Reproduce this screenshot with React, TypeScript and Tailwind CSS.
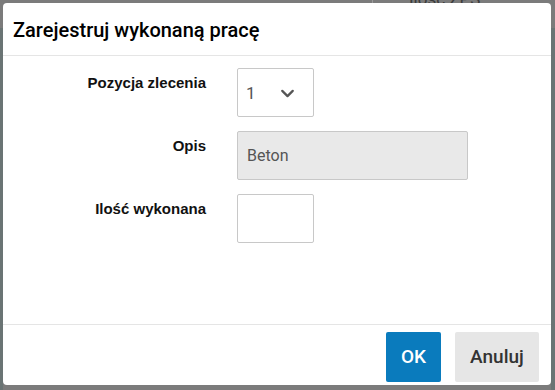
import { ChevronDown } from 'lucide-react';

const rowLabel =
  "w-[203px] shrink-0 pt-[5px] text-right font-['Liberation_Sans',Arial,sans-serif] text-[15px] leading-[20px] font-bold text-[#111]";

export default function App() {
  return (
    <div className="relative h-[390px] w-[555px] overflow-hidden bg-[#7b7b7b] font-['Roboto',sans-serif]">
      {/* backdrop scraps */}
      <div className="absolute left-0 top-[28px] h-[362px] w-[3px] bg-[#6a7474]" />
      <div className="absolute right-0 top-[28px] h-[362px] w-[4px] bg-[#6a7474]" />
      <div className="absolute left-[372px] top-0 h-[4px] w-px bg-[#9a9a9a]" />
      <div className="absolute left-[409px] top-[-11px] text-[17px] leading-[20px] text-[#3a3a3a]">Ilość ZPS</div>

      <div className="absolute left-[3px] top-[3px] flex h-[382px] w-[548px] flex-col rounded-[4px] bg-white">
        <div className="flex h-[53px] items-center border-b border-[#e5e5e5] pl-[10px] pt-[2px]">
          <h1 className="text-[20px] font-medium text-black">Zarejestruj wykonaną pracę</h1>
        </div>

        <div className="flex flex-1 flex-col gap-[14px] pt-[12px]">
          <div className="flex gap-[31px]">
            <div className={rowLabel}>Pozycja zlecenia</div>
            <div className="flex h-[49px] w-[77px] items-center justify-between rounded-[2px] border border-[#c8c8c8] pl-[8px] pr-[15px] pt-[2px] text-[17px] text-[#555]">
              <span>1</span>
              <ChevronDown size={21} strokeWidth={2.6} className="text-[#555]" />
            </div>
          </div>
          <div className="flex gap-[31px]">
            <div className={rowLabel}>Opis</div>
            <div className="flex h-[49px] w-[231px] items-center rounded-[2px] border border-[#c8c8c8] bg-[#e9e9e9] pl-[9px] text-[16px] text-[#555]">
              Beton
            </div>
          </div>
          <div className="flex gap-[31px]">
            <div className={rowLabel}>Ilość wykonana</div>
            <div className="h-[49px] w-[77px] rounded-[2px] border border-[#c8c8c8]" />
          </div>
        </div>

        <div className="flex h-[61px] items-start justify-end gap-[14px] border-t border-[#e5e5e5] pr-[12px] pt-[7px]">
          <button className="h-[50px] w-[55px] rounded-[2px] bg-[#0a7bbd] text-[19px] font-medium text-white">OK</button>
          <button className="h-[50px] w-[84px] rounded-[2px] bg-[#e6e6e6] text-[19px] font-medium text-[#333]">Anuluj</button>
        </div>
      </div>
    </div>
  );
}
